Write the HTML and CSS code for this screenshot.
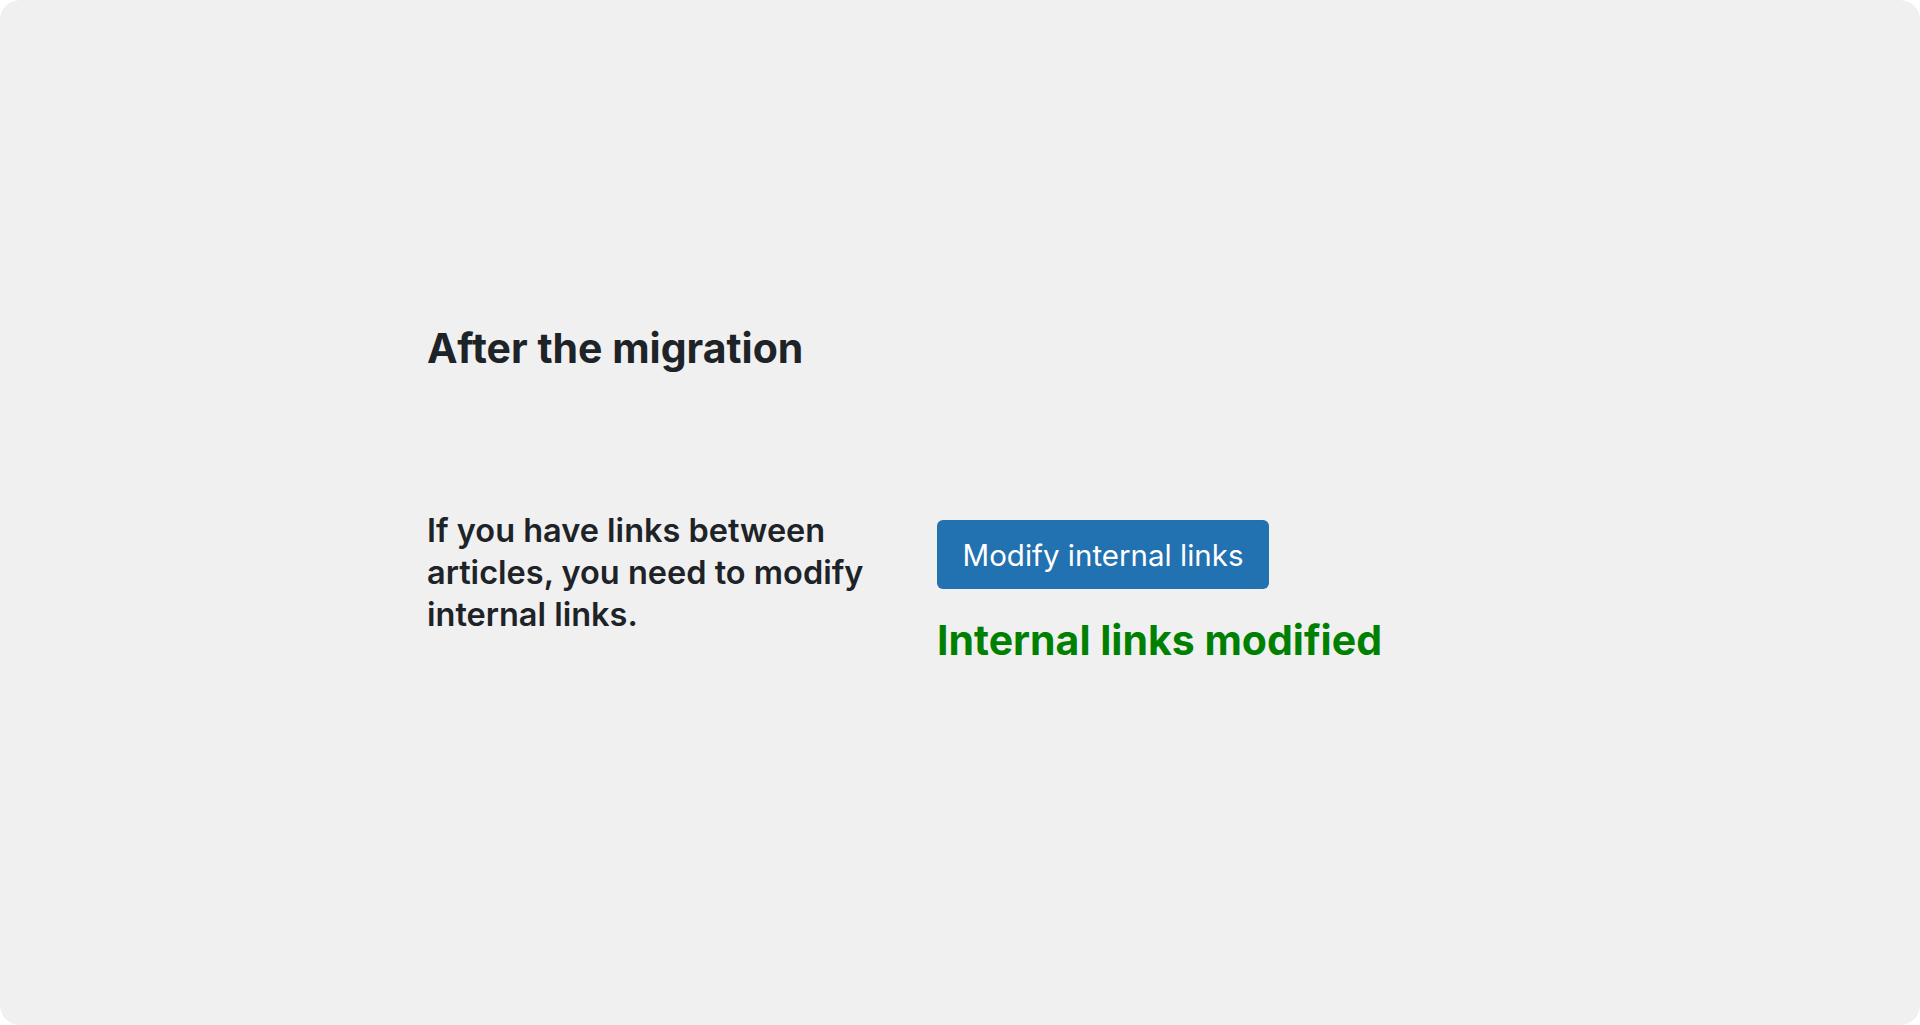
FILE: index.html
```html
<!DOCTYPE html>
<html lang="en">
<head>
<meta charset="utf-8">
<title>After the migration</title>
<link rel="stylesheet" href="styles.css">
</head>
<body>
<div class="panel">
  <div class="content">
    <h2 class="title">After the migration</h2>
    <div class="row">
      <div class="label">If you have links between articles, you need to modify internal links.</div>
      <div class="field">
        <button class="btn" type="button">Modify internal links</button>
        <div class="status">Internal links modified</div>
      </div>
    </div>
  </div>
</div>
</body>
</html>
```
FILE: styles.css
```css
html, body {
  margin: 0;
  padding: 0;
  background: #ffffff;
}
body {
  font-family: Inter, "Noto Sans", "Liberation Sans", sans-serif;
  color: #1d2327;
}
.panel {
  width: 1920px;
  height: 1025px;
  background: #f0f0f1;
  border-radius: 20px;
  box-sizing: border-box;
  padding: 319px 0 0 427px;
}
.title {
  margin: 0;
  font-size: 41px;
  font-weight: 700;
  line-height: 58px;
}
.row {
  display: flex;
  margin-top: 133px;
}
.label {
  width: 450px;
  font-size: 32.5px;
  font-weight: 600;
  line-height: 42px;
}
.field {
  margin-left: 60px;
  margin-top: 10px;
  display: flex;
  flex-direction: column;
  align-items: flex-start;
}
.btn {
  font-family: inherit;
  background: #2271b1;
  color: #ffffff;
  border: none;
  border-radius: 6px;
  height: 69px;
  width: 332px;
  padding: 0;
  font-size: 29.5px;
  font-weight: 400;
  cursor: pointer;
}
.status {
  margin-top: 22px;
  color: #008000;
  font-size: 41px;
  font-weight: 700;
  line-height: 58px;
}
```
